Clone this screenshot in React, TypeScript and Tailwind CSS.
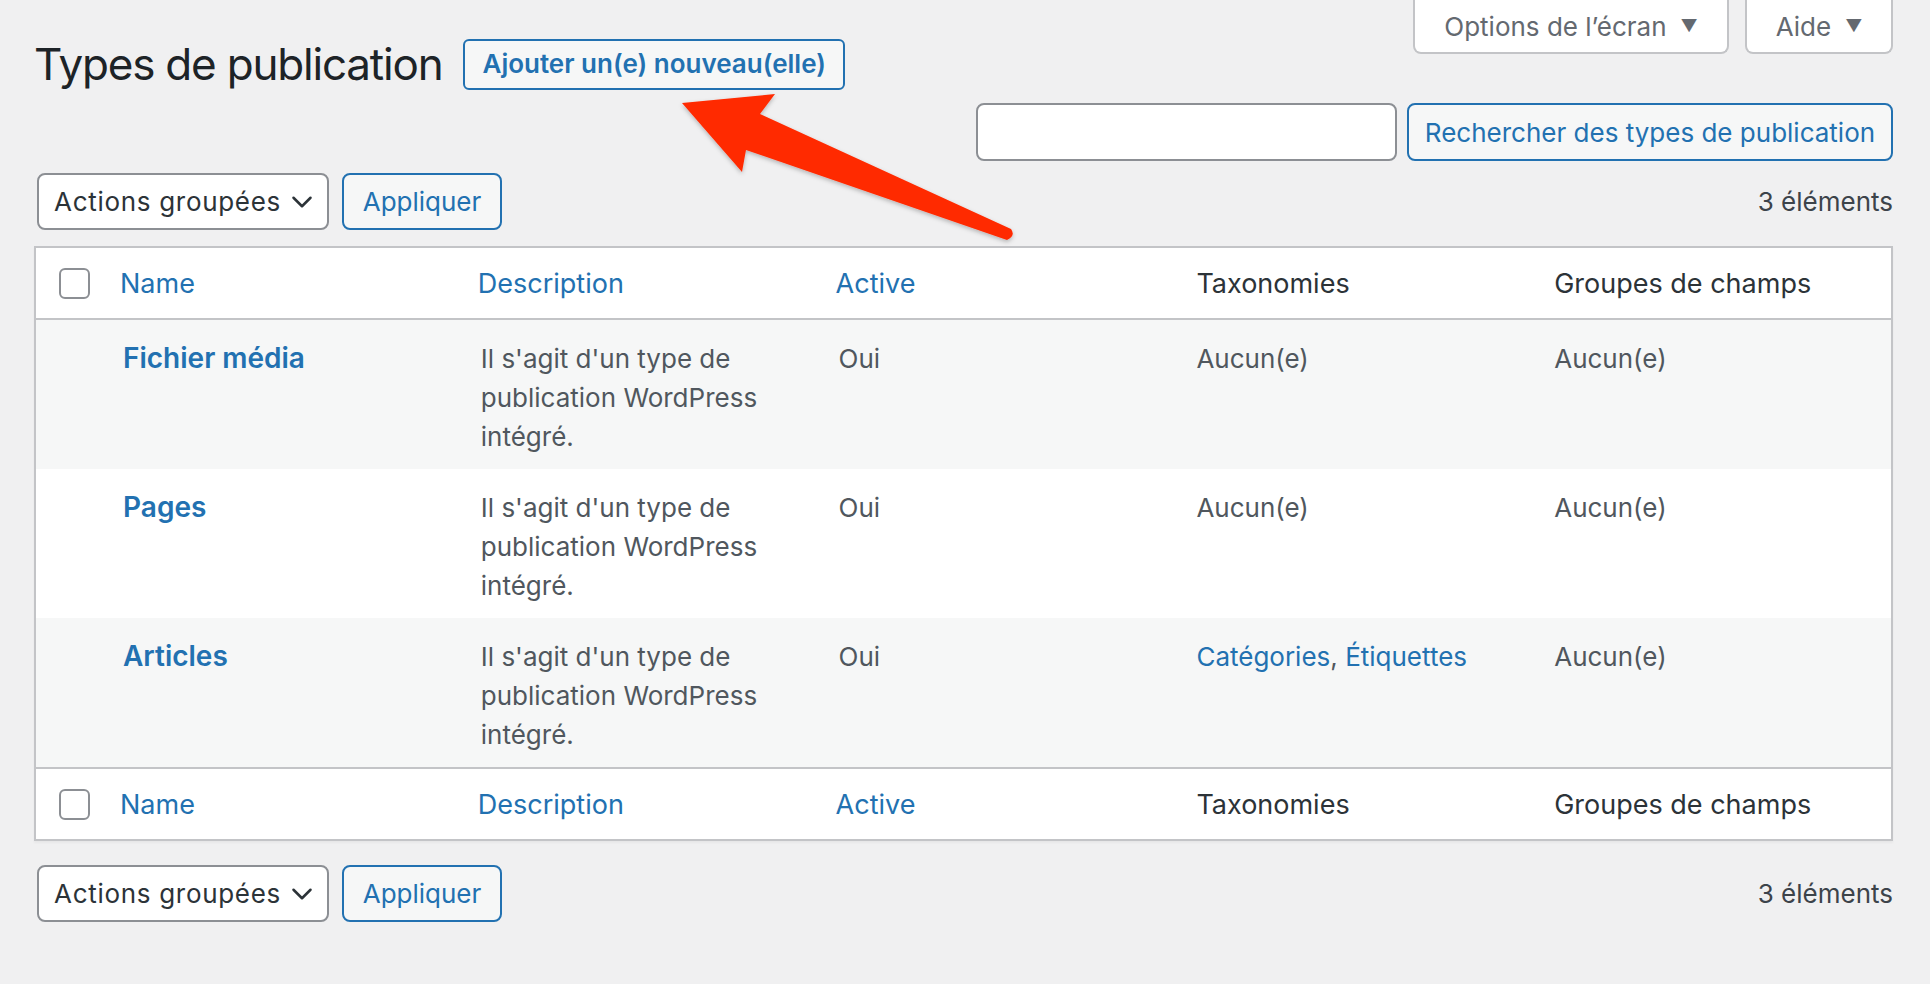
import { ChevronDown } from "lucide-react";

type PostType = {
  name: string;
  description: string;
  active: string;
  taxonomies: string[];
  fieldGroups: string;
};

const postTypes: PostType[] = [
  {
    name: "Fichier média",
    description: "Il s'agit d'un type de publication WordPress intégré.",
    active: "Oui",
    taxonomies: [],
    fieldGroups: "Aucun(e)",
  },
  {
    name: "Pages",
    description: "Il s'agit d'un type de publication WordPress intégré.",
    active: "Oui",
    taxonomies: [],
    fieldGroups: "Aucun(e)",
  },
  {
    name: "Articles",
    description: "Il s'agit d'un type de publication WordPress intégré.",
    active: "Oui",
    taxonomies: ["Catégories", "Étiquettes"],
    fieldGroups: "Aucun(e)",
  },
];

function Checkbox() {
  return <span className="block w-[31px] h-[31px] rounded-[6px] border-2 border-[#8c8f94] bg-white" />;
}

function BulkActions() {
  return (
    <div className="flex items-center gap-[13px] pl-[3px]">
      <div className="w-[292px] h-[57px] flex items-center justify-between pl-[15px] pr-[8px] rounded-[8px] border-2 border-[#8c8f94] bg-white text-[#2c3338]">
        <span className="tracking-[0.7px]">Actions groupées</span>
        <ChevronDown size={34} strokeWidth={1.8} className="text-[#2c3338]" />
      </div>
      <button className="w-[160px] h-[57px] rounded-[8px] border-2 border-[#2271b1] bg-[#f6f7f7] text-[#2271b1]">
        Appliquer
      </button>
    </div>
  );
}

function HeaderRow({ footer }: { footer?: boolean }) {
  const border = footer ? "border-t-2" : "border-b-2";
  return (
    <tr className={`bg-white ${border} border-[#c3c4c7] text-[27px]`}>
      <td className="h-[72px] pl-[23px] align-middle">
        <Checkbox />
      </td>
      <th className="pl-[17px] text-left font-normal text-[#2271b1]">Name</th>
      <th className="pl-[17px] text-left font-normal text-[#2271b1]">Description</th>
      <th className="pl-[17px] text-left font-normal text-[#2271b1]">Active</th>
      <th className="pl-[20px] text-left font-normal text-[#2c3338]">Taxonomies</th>
      <th className="pl-[20px] text-left font-normal text-[#2c3338]">Groupes de champs</th>
    </tr>
  );
}

export default function App() {
  return (
    <div
      className="relative min-h-screen bg-[#f0f0f1] pl-[34px] pr-[37px] text-[26px] leading-[39px] text-[#3c434a]"
      style={{ fontFamily: "Inter, 'Noto Sans', sans-serif" }}
    >
      <div className="flex items-start justify-between">
        <div className="flex items-center gap-[21px] pt-[34px]">
          <h1 className="text-[44px] leading-[60px] tracking-[-1.2px] font-normal text-[#1d2327]">Types de publication</h1>
          <button className="h-[51px] px-[17px] rounded-[6px] border-2 border-[#2271b1] bg-[#f6f7f7] text-[#2271b1] font-semibold leading-none">
            Ajouter un(e) nouveau(elle)
          </button>
        </div>
        <div className="flex gap-[16px]">
          <button className="h-[54px] w-[316px] flex items-center justify-center gap-[14px] rounded-b-[8px] border-2 border-t-0 border-[#c3c4c7] bg-white text-[#646970]">
            Options de l’écran
            <span className="text-[17px]">▼</span>
          </button>
          <button className="h-[54px] w-[148px] flex items-center justify-center gap-[14px] rounded-b-[8px] border-2 border-t-0 border-[#c3c4c7] bg-white text-[#646970]">
            Aide
            <span className="text-[17px]">▼</span>
          </button>
        </div>
      </div>

      <div className="flex justify-end gap-[10px] mt-[9px]">
        <input className="w-[421px] h-[58px] rounded-[8px] border-2 border-[#8c8f94] bg-white px-[14px] outline-none" />
        <button className="w-[486px] h-[58px] rounded-[8px] border-2 border-[#2271b1] bg-[#f6f7f7] text-[#2271b1]">
          Rechercher des types de publication
        </button>
      </div>

      <div className="flex items-center justify-between mt-[12px]">
        <BulkActions />
        <span className="text-[#3c434a]">3 éléments</span>
      </div>

      <table className="mt-[16px] w-full table-fixed border-2 border-[#c3c4c7] bg-white shadow-[0_2px_2px_rgba(0,0,0,0.04)]">
        <colgroup>
          <col className="w-[68px]" />
          <col />
          <col />
          <col />
          <col />
          <col />
        </colgroup>
        <thead>
          <HeaderRow />
        </thead>
        <tbody>
          {postTypes.map((row, index) => (
            <tr key={row.name} className={index % 2 === 0 ? "bg-[#f6f7f7]" : "bg-white"}>
              <td />
              <td className="pt-[19px] pb-[13px] pl-[20px] pr-[20px] align-top">
                <a className="text-[28px] font-semibold text-[#2271b1]">{row.name}</a>
              </td>
              <td className="pt-[19px] pb-[13px] pl-[20px] pr-[20px] align-top text-[#50575e]">{row.description}</td>
              <td className="pt-[19px] pb-[13px] pl-[20px] pr-[20px] align-top text-[#50575e]">{row.active}</td>
              <td className="pt-[19px] pb-[13px] pl-[20px] pr-[20px] align-top text-[#50575e]">
                {row.taxonomies.length === 0
                  ? "Aucun(e)"
                  : row.taxonomies.map((tax, i) => (
                      <span key={tax}>
                        <a className="text-[#2271b1]">{tax}</a>
                        {i < row.taxonomies.length - 1 && ", "}
                      </span>
                    ))}
              </td>
              <td className="pt-[19px] pb-[13px] pl-[20px] pr-[20px] align-top text-[#50575e]">{row.fieldGroups}</td>
            </tr>
          ))}
        </tbody>
        <tfoot>
          <HeaderRow footer />
        </tfoot>
      </table>

      <div className="flex items-center justify-between mt-[24px]">
        <BulkActions />
        <span className="text-[#3c434a]">3 éléments</span>
      </div>

      {/* annotation arrow over the header */}
      <svg className="pointer-events-none absolute left-0 top-0" width="1930" height="984">
        <defs>
          <filter id="arrow-shadow" x="-10%" y="-10%" width="120%" height="130%">
            <feDropShadow dx="0" dy="2" stdDeviation="2" floodColor="#000" floodOpacity="0.25" />
          </filter>
        </defs>
        <path
          d="M682 103 L775 94 L760 114 L1011 229 Q1016 236 1007 240 L746 150 L742 172 Z"
          fill="#ff2a00"
          filter="url(#arrow-shadow)"
        />
      </svg>
    </div>
  );
}
